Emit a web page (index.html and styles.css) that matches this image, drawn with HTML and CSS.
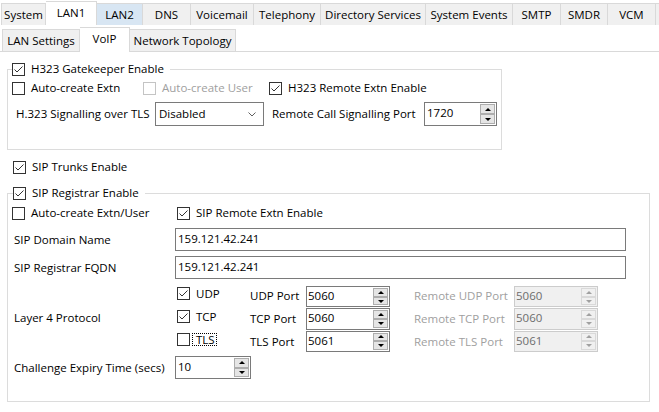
FILE: index.html
```html
<!DOCTYPE html>
<html lang="en">
<head>
    <meta charset="UTF-8">
    <meta name="viewport" content="width=device-width, initial-scale=1.0">
    <title>LAN1 - VoIP</title>
    <link rel="stylesheet" href="styles.css">
</head>
<body>
    <div class="tabs top-tabs">
        <div class="tab">System</div>
        <div class="tab active">LAN1</div>
        <div class="tab hover">LAN2</div>
        <div class="tab">DNS</div>
        <div class="tab">Voicemail</div>
        <div class="tab">Telephony</div>
        <div class="tab">Directory Services</div>
        <div class="tab">System Events</div>
        <div class="tab">SMTP</div>
        <div class="tab">SMDR</div>
        <div class="tab">VCM</div>
        <div class="tab"></div>
    </div>
    <div class="tabs sub-tabs">
        <div class="tab">LAN Settings</div>
        <div class="tab active">VoIP</div>
        <div class="tab">Network Topology</div>
    </div>

    <fieldset class="group h323">
        <legend>
            <label class="check"><svg class="cb" width="13" height="13" viewBox="0 0 13 13"><rect x="0.5" y="0.5" width="12" height="12"/><path d="M2.5 6.5 5 9l5.5-5.5"/></svg>H323 Gatekeeper Enable</label>
        </legend>
        <div class="checks">
            <label class="check"><svg class="cb" width="13" height="13" viewBox="0 0 13 13"><rect x="0.5" y="0.5" width="12" height="12"/></svg>Auto-create Extn</label>
            <label class="check disabled"><svg class="cb off" width="13" height="13" viewBox="0 0 13 13"><rect x="0.5" y="0.5" width="12" height="12"/></svg>Auto-create User</label>
            <label class="check"><svg class="cb" width="13" height="13" viewBox="0 0 13 13"><rect x="0.5" y="0.5" width="12" height="12"/><path d="M2.5 6.5 5 9l5.5-5.5"/></svg>H323 Remote Extn Enable</label>
        </div>
        <div class="field-row">
            <span class="caption">H.323 Signalling over TLS</span>
            <div class="select">
                <span>Disabled</span>
                <svg width="8" height="5" viewBox="0 0 8 5"><path d="M0.5 0.5 4 4l3.5-3.5"/></svg>
            </div>
            <span class="caption port">Remote Call Signalling Port</span>
            <div class="spin big">
                <span class="value">1720</span>
                <span class="arrows"><span class="up"></span><span class="down"></span></span>
            </div>
        </div>
    </fieldset>

    <label class="check trunks"><svg class="cb" width="13" height="13" viewBox="0 0 13 13"><rect x="0.5" y="0.5" width="12" height="12"/><path d="M2.5 6.5 5 9l5.5-5.5"/></svg>SIP Trunks Enable</label>

    <fieldset class="group sip">
        <legend>
            <label class="check"><svg class="cb" width="13" height="13" viewBox="0 0 13 13"><rect x="0.5" y="0.5" width="12" height="12"/><path d="M2.5 6.5 5 9l5.5-5.5"/></svg>SIP Registrar Enable</label>
        </legend>
        <div class="checks">
            <label class="check"><svg class="cb" width="13" height="13" viewBox="0 0 13 13"><rect x="0.5" y="0.5" width="12" height="12"/></svg>Auto-create Extn/User</label>
            <label class="check"><svg class="cb" width="13" height="13" viewBox="0 0 13 13"><rect x="0.5" y="0.5" width="12" height="12"/><path d="M2.5 6.5 5 9l5.5-5.5"/></svg>SIP Remote Extn Enable</label>
        </div>
        <div class="form-row domain">
            <span class="caption">SIP Domain Name</span>
            <div class="text">159.121.42.241</div>
        </div>
        <div class="form-row">
            <span class="caption">SIP Registrar FQDN</span>
            <div class="text">159.121.42.241</div>
        </div>
        <div class="form-row layer4">
            <span class="caption">Layer 4 Protocol</span>
            <div class="ports">
                <div class="col protos">
                    <label class="check"><svg class="cb" width="13" height="13" viewBox="0 0 13 13"><rect x="0.5" y="0.5" width="12" height="12"/><path d="M2.5 6.5 5 9l5.5-5.5"/></svg>UDP</label>
                    <label class="check"><svg class="cb" width="13" height="13" viewBox="0 0 13 13"><rect x="0.5" y="0.5" width="12" height="12"/><path d="M2.5 6.5 5 9l5.5-5.5"/></svg>TCP</label>
                    <label class="check"><svg class="cb" width="13" height="13" viewBox="0 0 13 13"><rect x="0.5" y="0.5" width="12" height="12"/></svg><span class="focus">TLS</span></label>
                </div>
                <div class="col port-labels">
                    <span>UDP Port</span>
                    <span>TCP Port</span>
                    <span>TLS Port</span>
                </div>
                <div class="col port-spins">
                    <div class="spin"><span class="value">5060</span><span class="arrows"><span class="up"></span><span class="down"></span></span></div>
                    <div class="spin"><span class="value">5060</span><span class="arrows"><span class="up"></span><span class="down"></span></span></div>
                    <div class="spin"><span class="value">5061</span><span class="arrows"><span class="up"></span><span class="down"></span></span></div>
                </div>
                <div class="col port-labels remote disabled">
                    <span>Remote UDP Port</span>
                    <span>Remote TCP Port</span>
                    <span>Remote TLS Port</span>
                </div>
                <div class="col port-spins">
                    <div class="spin off"><span class="value">5060</span><span class="arrows"><span class="up"></span><span class="down"></span></span></div>
                    <div class="spin off"><span class="value">5060</span><span class="arrows"><span class="up"></span><span class="down"></span></span></div>
                    <div class="spin off"><span class="value">5061</span><span class="arrows"><span class="up"></span><span class="down"></span></span></div>
                </div>
            </div>
        </div>
        <div class="form-row expiry">
            <span class="caption">Challenge Expiry Time (secs)</span>
            <div class="spin">
                <span class="value">10</span>
                <span class="arrows"><span class="up"></span><span class="down"></span></span>
            </div>
        </div>
    </fieldset>
</body>
</html>
```

FILE: styles.css
```css
* {
    box-sizing: border-box;
}
body {
    margin: 0;
    width: 659px;
    height: 412px;
    overflow: hidden;
    background: #fff;
    color: #000;
    font-family: "Open Sans", sans-serif;
    font-size: 11.5px;
    line-height: 14px;
}

/* tab strips */
.tabs {
    display: grid;
    align-items: start;
    white-space: nowrap;
}
.top-tabs {
    grid-template-columns: 45px 51px 46px 48px 63px 67px 105px 87px 48px 47px 48px 20px;
    height: 25px;
    padding: 3px 0 0 1px;
    overflow: hidden;
}
.sub-tabs {
    grid-template-columns: 78px 50px 106px;
    height: 27px;
    padding: 4px 0 0 2px;
    border-bottom: 1px solid #d9d9d9;
}
.tab {
    height: 22px;
    border: 1px solid #d9d9d9;
    border-left: 0;
    border-bottom: 0;
    background: #f0f0f0;
    text-align: center;
    line-height: 21px;
}
.tab:first-child {
    border-left: 1px solid #d9d9d9;
}
.tab.hover {
    background: #d8e6f3;
}
.tab.active {
    height: 25px;
    margin-top: -2px;
    background: #fff;
}

/* check boxes */
.check {
    display: flex;
    align-items: center;
    gap: 6px;
    white-space: nowrap;
}
.cb {
    flex: none;
}
.cb rect {
    fill: #fff;
    stroke: #333;
}
.cb path {
    fill: none;
    stroke: #333;
}
.cb.off rect {
    stroke: #c4c4c4;
}
.disabled {
    color: #a0a0a0;
}
.focus {
    display: inline-block;
    line-height: 13px;
    padding: 0 2px 0 4px;
    margin-left: -4px;
    outline: 1px dotted #000;
    outline-offset: -1px;
}

/* group boxes */
.group {
    margin: 10px 0 0 7px;
    padding: 0 0 22px 4px;
    border: 1px solid #dcdcdc;
    min-width: 0;
}
.group legend {
    padding: 0 6px 0 0;
}
.h323 {
    width: 495px;
    padding-bottom: 23px;
}
.sip {
    width: 643px;
    margin-top: 12px;
}
.sip legend {
    margin-left: 1px;
}
.checks {
    display: grid;
    align-items: center;
    height: 16px;
    margin-top: 4px;
}
.h323 .checks {
    grid-template-columns: 131px 126px auto;
}
.sip .checks {
    grid-template-columns: 165px auto;
    margin-top: 5px;
}
.trunks {
    height: 14px;
    margin: 10px 0 0 13px;
}

/* rows */
.field-row {
    display: flex;
    align-items: center;
    height: 24px;
    margin-top: 6px;
}
.field-row .caption {
    width: 143px;
    padding-left: 4px;
}
.field-row .caption.port {
    width: 160px;
    padding-left: 8px;
}
.select {
    width: 109px;
    height: 24px;
    display: flex;
    align-items: center;
    justify-content: space-between;
    padding: 0 7px 0 3px;
    border: 1px solid #7a7a7a;
}
.select svg path {
    fill: none;
    stroke: #606060;
}
.form-row {
    display: grid;
    grid-template-columns: 163px auto;
    align-items: center;
    margin-top: 5px;
}
.form-row .caption {
    padding-left: 2px;
}
.domain {
    margin-top: 7px;
}
.text {
    width: 451px;
    height: 23px;
    padding: 0 2px;
    border: 1px solid #7a7a7a;
    line-height: 20px;
}
.layer4 {
    margin-top: 1px;
}
.layer4 .caption {
    padding-top: 4px;
}
.expiry {
    margin-top: 4px;
}

/* port columns */
.ports {
    display: flex;
    height: 72px;
    overflow: hidden;
    padding-left: 2px;
}
.col {
    display: flex;
    flex-direction: column;
    flex: none;
}
.protos {
    width: 73px;
    padding-top: 2px;
}
.protos .check {
    height: 23px;
}
.port-labels {
    width: 56px;
    padding-top: 4px;
}
.port-labels span {
    height: 23px;
    line-height: 23px;
}
.port-labels.remote {
    width: 100px;
    margin-left: 24px;
}
.port-spins {
    width: 84px;
    padding-top: 6px;
    gap: 1px;
}
.port-spins .spin {
    height: 22px;
}

/* spin boxes */
.spin {
    display: flex;
    height: 23px;
    padding: 1px;
    border: 1px solid #7a7a7a;
    background: #fff;
}
.spin.big {
    width: 73px;
    height: 24px;
}
.expiry .spin {
    width: 76px;
}
.spin .value {
    flex: 1;
    padding-left: 1px;
    line-height: 17px;
}
.port-spins .spin .value {
    padding-left: 0;
    line-height: 16px;
}
.arrows {
    width: 15px;
    display: flex;
    flex-direction: column;
}
.arrows span {
    flex: 1;
    display: flex;
    align-items: center;
    justify-content: center;
    border: 1px solid #adadad;
    background: #e5e5e5;
}
.arrows .up::after {
    content: "";
    border: 3px solid transparent;
    border-top: 0;
    border-bottom-color: #000;
}
.arrows .down::after {
    content: "";
    border: 3px solid transparent;
    border-bottom: 0;
    border-top-color: #000;
}
.spin.off {
    background: #f0f0f0;
    border-color: #cccccc;
    color: #6d6d6d;
}
.spin.off .arrows span {
    border-color: #d9d9d9;
    background: #f0f0f0;
}
.spin.off .arrows .up::after {
    border-bottom-color: #a0a0a0;
}
.spin.off .arrows .down::after {
    border-top-color: #a0a0a0;
}
```
